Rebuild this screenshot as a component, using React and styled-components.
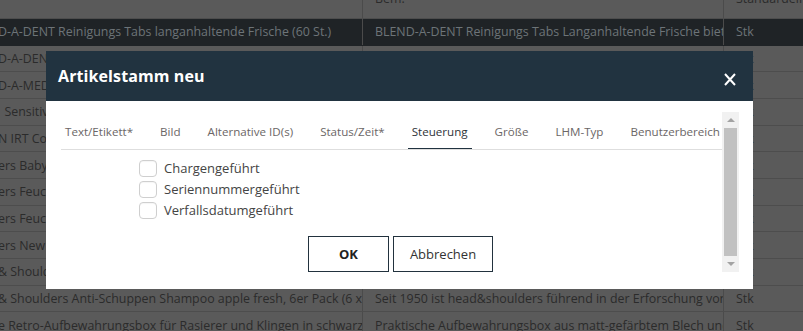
import React from 'react';
import styled, { createGlobalStyle } from 'styled-components';

const Global = createGlobalStyle`
  html, body {
    margin: 0;
    padding: 0;
    background: #5a5a5a;
    overflow: hidden;
  }
  body {
    font-family: 'Open Sans', 'Noto Sans', sans-serif;
  }
  * { box-sizing: border-box; }
`;

const Page = styled.div`
  position: relative;
  width: 803px;
  height: 331px;
  overflow: hidden;
`;

const Table = styled.div`
  margin-top: -12px;
  display: flex;
  flex-direction: column;
`;

const Row = styled.div`
  display: grid;
  grid-template-columns: 363px 361px 1fr;
  height: ${(p) => (p.$head ? '31px' : '26.67px')};
  background: ${(p) => (p.$selected ? '#1f2326' : 'transparent')};
  border-bottom: 1px solid ${(p) => (p.$selected ? '#1f2326' : '#4d4d4d')};
  color: ${(p) => (p.$selected ? '#6d7478' : '#2b2b2b')};
  font-size: 12.4px;
`;

const Cell = styled.div`
  display: flex;
  align-items: center;
  padding-left: ${(p) => (p.$first ? '0' : '12px')};
  padding-bottom: ${(p) => (p.$head ? '9px' : '0')};
  border-right: ${(p) => (p.$last ? 'none' : '1px solid #4b4b4b')};
  white-space: pre;
  overflow: hidden;
  span {
    margin-left: ${(p) => (p.$first ? '-2px' : '0')};
  }
`;

const Modal = styled.div`
  position: absolute;
  left: 46px;
  top: 51px;
  width: 707px;
  height: 238px;
  display: flex;
  flex-direction: column;
  background: #fff;
`;

const ModalHeader = styled.div`
  height: 50px;
  flex: none;
  background: #213340;
  display: flex;
  align-items: center;
  justify-content: space-between;
  padding: 0 17px 0 12px;
`;

const Title = styled.h2`
  margin: 0;
  color: #fff;
  font-size: 16px;
  font-weight: 700;
  letter-spacing: 0.1px;
`;

const Close = styled.button`
  border: 0;
  padding: 0;
  margin-top: 6px;
  background: transparent;
  width: 12px;
  height: 13px;
  display: flex;
  cursor: pointer;
`;

const ModalBody = styled.div`
  flex: 1;
  display: flex;
  padding: 11px 14px 17px 15px;
  min-height: 0;
`;

const ScrollArea = styled.div`
  flex: 1;
  min-width: 0;
  overflow: hidden;
  display: flex;
  flex-direction: column;
`;

const Tabs = styled.div`
  display: flex;
  gap: 19px;
  height: 38px;
  flex: none;
  border-bottom: 1px solid #dedede;
  white-space: nowrap;
  overflow: hidden;
`;

const Tab = styled.div`
  flex: none;
  height: 38px;
  padding: 0 4px;
  display: flex;
  align-items: center;
  font-size: 11.6px;
  color: ${(p) => (p.$active ? '#2e3338' : '#6b6666')};
  border-bottom: 2px solid ${(p) => (p.$active ? '#213340' : 'transparent')};
  margin-bottom: -1px;
  padding-top: 2px;
`;

const Checks = styled.div`
  margin-top: 9px;
  padding-left: 78px;
  display: flex;
  flex-direction: column;
`;

const CheckRow = styled.label`
  display: flex;
  align-items: flex-start;
  height: 21px;
  gap: 7px;
  font-size: 13px;
  color: #444;
`;

const Box = styled.span`
  width: 18px;
  height: 17px;
  margin-top: 1px;
  border: 1px solid #cfcfcf;
  border-radius: 4px;
  background: #fff;
  box-shadow: inset 0 1px 1px rgba(0, 0, 0, 0.04);
`;

const Label = styled.span`
  line-height: 19px;
`;

const Buttons = styled.div`
  margin-top: 14px;
  padding-left: 18px;
  display: flex;
  justify-content: center;
  gap: 4px;
`;

const Button = styled.button`
  height: 36px;
  min-width: 81px;
  padding: 0 16px;
  background: #fff;
  border: 1px solid #22323e;
  font-family: inherit;
  font-size: 13px;
  font-weight: ${(p) => (p.$primary ? 700 : 400)};
  color: ${(p) => (p.$primary ? '#222' : '#333')};
  cursor: pointer;
`;

const Scrollbar = styled.div`
  width: 17px;
  flex: none;
  background: #f1f1f1;
  display: flex;
  flex-direction: column;
`;

const Arrow = styled.div`
  height: 16px;
  flex: none;
  display: flex;
  align-items: center;
  justify-content: center;
  &::after {
    content: '';
    width: 0;
    height: 0;
    border-left: 4px solid transparent;
    border-right: 4px solid transparent;
    ${(p) =>
      p.$down
        ? 'border-top: 4px solid #a3a3a3;'
        : 'border-bottom: 4px solid #a3a3a3;'}
  }
`;

const Thumb = styled.div`
  flex: 1;
  margin: 0 2px;
  background: #c1c1c1;
`;

const rows = [
  ['', 'Bem.', 'Standardeinheit', 'head'],
  [
    'D-A-DENT Reinigungs Tabs langanhaltende Frische (60 St.)',
    'BLEND-A-DENT Reinigungs Tabs Langanhaltende Frische bietet',
    'Stk',
    'selected',
  ],
  ['D-A-DENT Extra Frisch Haftcreme (47 g)', 'BLEND-A-DENT Haftcreme', 'Stk'],
  ['D-A-MED Zahnpasta Classic (75 ml)', 'BLEND-A-MED Classic', 'Stk'],
  ['  Sensitive Zahnbürste (2 St.)', 'Sanfte Reinigung', 'Stk'],
  ['N IRT Connect Ohrthermometer', 'Braun ThermoScan', 'Stk'],
  ['ers Baby Feuchttücher (4 x 64 St.)', 'Pampers Baby', 'Stk'],
  ['ers Feuchttücher Sensitive (12 x 52 St.)', 'Pampers Sensitive', 'Stk'],
  ['ers Feuchttücher Fresh Clean (4 x 80 St.)', 'Pampers Fresh Clean', 'Stk'],
  ['ers New Baby Windeln Gr. 1', 'Pampers New Baby', 'Stk'],
  ['& Shoulders Classic Clean Shampoo (250 ml)', 'Seit 1950 ist head&shoulders', 'Stk'],
  [
    '& Shoulders Anti-Schuppen Shampoo apple fresh, 6er Pack (6 x 250 ml)',
    'Seit 1950 ist head&shoulders führend in der Erforschung von',
    'Stk',
  ],
  [
    'e Retro-Aufbewahrungsbox für Rasierer und Klingen in schwarz',
    'Praktische Aufbewahrungsbox aus matt-gefärbtem Blech und',
    'Stk',
  ],
];

const tabs = [
  'Text/Etikett*',
  'Bild',
  'Alternative ID(s)',
  'Status/Zeit*',
  'Steuerung',
  'Größe',
  'LHM-Typ',
  'Benutzerbereich',
];

const checks = ['Chargengeführt', 'Seriennummergeführt', 'Verfallsdatumgeführt'];

export default function App() {
  return (
    <Page>
      <Global />
      <Table>
        {rows.map(([a, b, c, kind], i) => (
          <Row key={i} $head={kind === 'head'} $selected={kind === 'selected'}>
            <Cell $first $head={kind === 'head'}>
              <span>{a}</span>
            </Cell>
            <Cell $head={kind === 'head'}>
              <span>{b}</span>
            </Cell>
            <Cell $last $head={kind === 'head'}>
              <span>{c}</span>
            </Cell>
          </Row>
        ))}
      </Table>

      <Modal>
        <ModalHeader>
          <Title>Artikelstamm neu</Title>
          <Close aria-label="Schließen">
            <svg width="12" height="13" viewBox="0 0 12 13">
              <path
                d="M1 1 L11 12 M11 1 L1 12"
                stroke="#fff"
                strokeWidth="2"
                fill="none"
              />
            </svg>
          </Close>
        </ModalHeader>
        <ModalBody>
          <ScrollArea>
            <Tabs>
              {tabs.map((t) => (
                <Tab key={t} $active={t === 'Steuerung'}>
                  {t}
                </Tab>
              ))}
            </Tabs>
            <Checks>
              {checks.map((c) => (
                <CheckRow key={c}>
                  <Box />
                  <Label>{c}</Label>
                </CheckRow>
              ))}
            </Checks>
            <Buttons>
              <Button $primary>OK</Button>
              <Button>Abbrechen</Button>
            </Buttons>
          </ScrollArea>
          <Scrollbar>
            <Arrow />
            <Thumb />
            <Arrow $down />
          </Scrollbar>
        </ModalBody>
      </Modal>
    </Page>
  );
}
